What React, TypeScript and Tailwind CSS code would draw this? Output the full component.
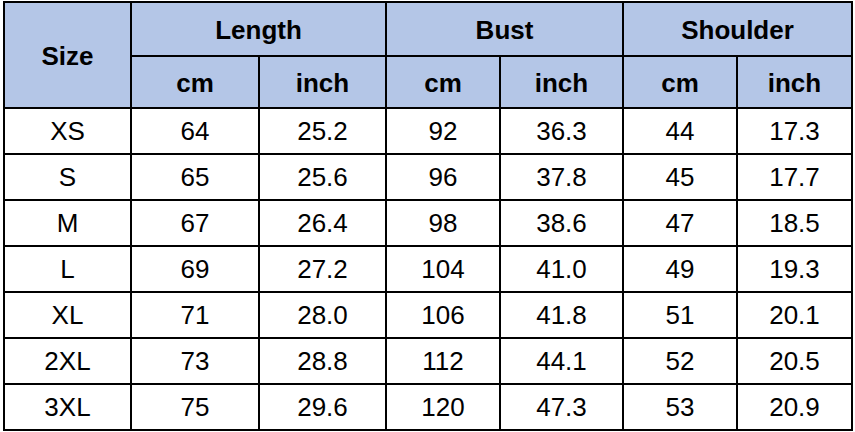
import React from "react";

const rows = [
  ["XS", "64", "25.2", "92", "36.3", "44", "17.3"],
  ["S", "65", "25.6", "96", "37.8", "45", "17.7"],
  ["M", "67", "26.4", "98", "38.6", "47", "18.5"],
  ["L", "69", "27.2", "104", "41.0", "49", "19.3"],
  ["XL", "71", "28.0", "106", "41.8", "51", "20.1"],
  ["2XL", "73", "28.8", "112", "44.1", "52", "20.5"],
  ["3XL", "75", "29.6", "120", "47.3", "53", "20.9"],
];

export default function App() {
  const hdr =
    "bg-[#b4c6e7] flex items-center justify-center font-bold text-[26px] text-black pt-[2px]";
  const cell = "bg-white flex items-center justify-center text-[26px] text-black pt-[1px]";
  return (
    <div
      className="w-[855px] h-[432px] bg-white pl-[3px] pt-[1px]"
      style={{ fontFamily: '"Liberation Sans", Arial, sans-serif' }}
    >
      <div className="inline-grid bg-black p-[2px] gap-[2px] grid-cols-[125px_126px_125px_112px_121px_112px_113px] grid-rows-[52px_50px_repeat(7,44px)]">
        <div className={`${hdr} row-span-2`}>Size</div>
        <div className={`${hdr} col-span-2`}>Length</div>
        <div className={`${hdr} col-span-2`}>Bust</div>
        <div className={`${hdr} col-span-2`}>Shoulder</div>
        <div className={hdr}>cm</div>
        <div className={hdr}>inch</div>
        <div className={hdr}>cm</div>
        <div className={hdr}>inch</div>
        <div className={hdr}>cm</div>
        <div className={hdr}>inch</div>
        {rows.map((r, i) =>
          r.map((v, j) => (
            <div key={`${i}-${j}`} className={cell}>
              {v}
            </div>
          ))
        )}
      </div>
    </div>
  );
}
